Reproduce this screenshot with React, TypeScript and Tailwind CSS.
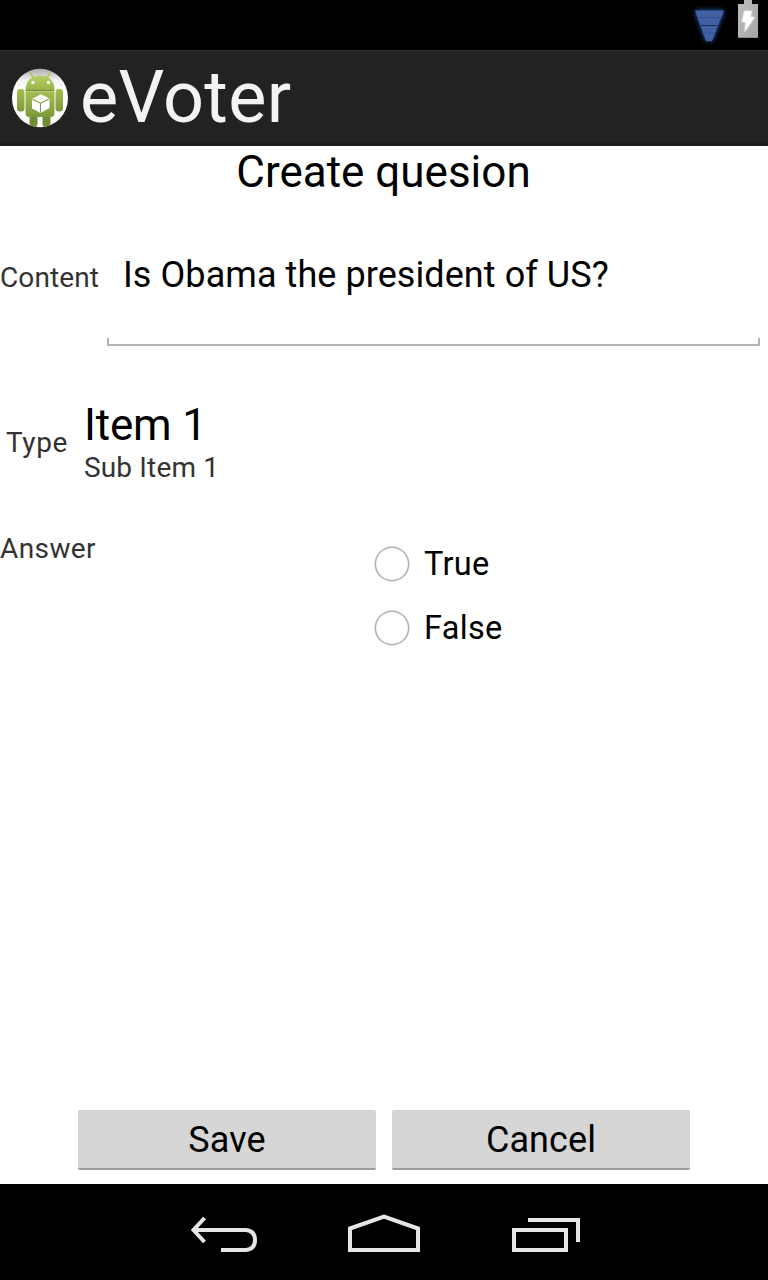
import React from "react";

function StatusBar() {
  return (
    <div className="flex h-[50px] shrink-0 justify-end bg-black">
      <svg className="h-[50px] w-[88px]" viewBox="680 0 88 50">
        <defs>
          <filter id="glow" x="-50%" y="-50%" width="200%" height="200%">
            <feGaussianBlur stdDeviation="2.6" />
          </filter>
          <filter id="boltGlow" x="-50%" y="-50%" width="200%" height="200%">
            <feGaussianBlur stdDeviation="1.2" />
          </filter>
          <linearGradient id="battery" x1="0" y1="0" x2="1" y2="1">
            <stop offset="0" stopColor="#bdbdbd" />
            <stop offset="1" stopColor="#a6a6a6" />
          </linearGradient>
        </defs>
        <path d="M695 10.500H724L712 41H706Z" fill="#2f62c4" filter="url(#glow)" />
        <path d="M695 10.500H724L712 41H706Z" fill="#4060a2" />
        <path d="M698 17.500H721M704 33H715" stroke="#34528f" strokeWidth="1" />
        <path d="M701 25.500H718" stroke="#1c2f5c" strokeWidth="1" />
        <path d="M744 0H752V4H758V38H738V4H744Z" fill="url(#battery)" />
        <path d="M738 37.500H758" stroke="#8c8c8c" strokeWidth="1" />
        <path d="M744.500 11H752L750 17H754.500L744.500 32L746 22H742Z" fill="#fff" filter="url(#boltGlow)" />
        <path d="M744.500 11H752L750 17H754.500L744.500 32L746 22H742Z" fill="#fff" />
      </svg>
    </div>
  );
}

function AppIcon() {
  return (
    <svg className="h-[60px] w-[60px]" viewBox="10 68 60 60">
      <defs>
        <linearGradient id="green" x1="0" y1="0" x2="0" y2="1">
          <stop offset="0" stopColor="#a3bf52" />
          <stop offset="1" stopColor="#7c9a3a" />
        </linearGradient>
        <linearGradient id="head" x1="0" y1="0" x2="0" y2="1">
          <stop offset="0" stopColor="#b6cf66" />
          <stop offset="1" stopColor="#98b548" />
        </linearGradient>
        <linearGradient id="disc" x1="0" y1="0" x2="0" y2="1">
          <stop offset="0" stopColor="#a8a8a8" />
          <stop offset="0.2" stopColor="#f4f4f4" />
          <stop offset="0.4" stopColor="#fff" />
        </linearGradient>
        <clipPath id="round">
          <ellipse cx="40" cy="98" rx="28" ry="29.300" />
        </clipPath>
      </defs>
      <ellipse cx="40" cy="98" rx="28" ry="29.300" fill="url(#disc)" />
      <g clipPath="url(#round)">
        <path d="M29.500 113H37.500V124Q37 127.500 33.500 127.500Q29.500 127 29.500 124ZM42.500 113H50.500V124Q50 127.500 46.500 127.500Q42.500 127 42.500 124Z" fill="#6f8d32" />
      </g>
      <rect x="17" y="89" width="7.500" height="22.500" rx="3" fill="url(#green)" />
      <rect x="55.500" y="89" width="7.500" height="22.500" rx="3" fill="url(#green)" />
      <path d="M25.500 91.500H54.500V113Q54.500 117 50.500 117H29.500Q25.500 117 25.500 113Z" fill="url(#green)" />
      <path d="M30.500 73L33.500 78M50 73L47 78" stroke="#a5c54b" strokeWidth="1.500" strokeLinecap="round" />
      <path d="M25.500 90C26 80 32 75.500 40 75.500S54.500 80 54.500 90Z" fill="url(#head)" />
      <path d="M25.500 90.600H54.500" stroke="#6f8c31" strokeWidth="1.200" />
      <circle cx="33" cy="82.500" r="1.700" fill="#fff" />
      <circle cx="48.500" cy="82.500" r="1.700" fill="#fff" />
      <path d="M32 99L41 94.300L49.500 98.500V108L40.500 113L32 108.500Z" fill="#fff" />
      <path d="M32.500 99.300L40.500 103.200L49 99M40.500 103.200V112.500" fill="none" stroke="#809c43" strokeWidth="1.100" />
    </svg>
  );
}

function Radio({ label }: { label: string }) {
  return (
    <label className="flex h-16 items-center">
      <svg className="h-9 w-9" viewBox="0 0 36 36">
        <circle cx="18" cy="18" r="16.700" fill="none" stroke="#b2b2b2" strokeWidth="1.600" />
      </svg>
      <span className="ml-[14px] text-[32.500px] leading-[64px] tracking-[0.3px]">{label}</span>
    </label>
  );
}

function ActionButton({ label }: { label: string }) {
  return (
    <button className="h-[60px] w-[298px] rounded-[2px] border-t border-b-2 border-t-[#cfcfcf] border-b-[#9c9c9c] bg-[#d6d6d6] pt-[2px] text-[36px] leading-[55px] tracking-[0.1px]">
      {label}
    </button>
  );
}

function NavBar() {
  return (
    <nav className="flex h-24 shrink-0 bg-black pl-[180px]">
      <svg className="h-24 w-[420px]" viewBox="180 1184 420 96" fill="none" stroke="#e6e6e6" strokeWidth="4">
        <path d="M194 1230H246Q255 1231 255 1240Q255 1249 246 1250H221" />
        <path d="M204.500 1218L193.500 1230L204.500 1242" />
        <path d="M350 1228.500L384 1216.500L418 1228.500V1250H350Z" />
        <path d="M514 1230H566V1250H514ZM528 1220H578V1242" />
      </svg>
    </nav>
  );
}

export default function App() {
  return (
    <div className="flex h-[1280px] w-[768px] flex-col overflow-hidden bg-white font-['Roboto',sans-serif] text-black">
      <StatusBar />
      <header className="flex h-24 shrink-0 items-center border-t border-b-4 border-t-[#303030] border-b-[#1b1b1b] bg-[#222222] pt-[2px] pl-[10px]">
        <AppIcon />
        <h1 className="ml-[10px] text-[72px] leading-[89px] tracking-[0.3px] text-[#f3f3f3]">eVoter</h1>
      </header>
      <main className="flex flex-1 flex-col">
        <h2 className="pr-[1px] text-center text-[44px] leading-[52px]">Create quesion</h2>
        <div className="mt-[56px] flex h-[92px]">
          <label className="w-[107px] pt-[8px] text-[28px] leading-[32px] tracking-[0.1px] text-[#333333]">Content</label>
          <div className="flex w-[653px] flex-col justify-between">
            <div className="pl-4 text-[36px] leading-[42px] tracking-[0.07px]">Is Obama the president of US?</div>
            <div className="h-2 border-x-2 border-b-2 border-[#b2b2b2]" />
          </div>
        </div>
        <div className="mt-[53px] flex h-[84px]">
          <div className="w-[84px] pt-[28px] pl-[6px] text-[28px] leading-[32px] tracking-[0.6px] text-[#333333]">Type</div>
          <div>
            <div className="text-[44px] leading-[52px] tracking-[-0.2px]">Item 1</div>
            <div className="pt-px text-[28px] leading-[32px] tracking-[0.15px] text-[#333333]">Sub Item 1</div>
          </div>
        </div>
        <div className="mt-[49px] flex">
          <div className="w-[374px] pt-px text-[28px] leading-[32px] tracking-[0.4px] text-[#333333]">Answer</div>
          <div className="flex flex-col">
            <Radio label="True" />
            <Radio label="False" />
          </div>
        </div>
        <div className="mt-auto mb-[14px] flex justify-center gap-4">
          <ActionButton label="Save" />
          <ActionButton label="Cancel" />
        </div>
      </main>
      <NavBar />
    </div>
  );
}
